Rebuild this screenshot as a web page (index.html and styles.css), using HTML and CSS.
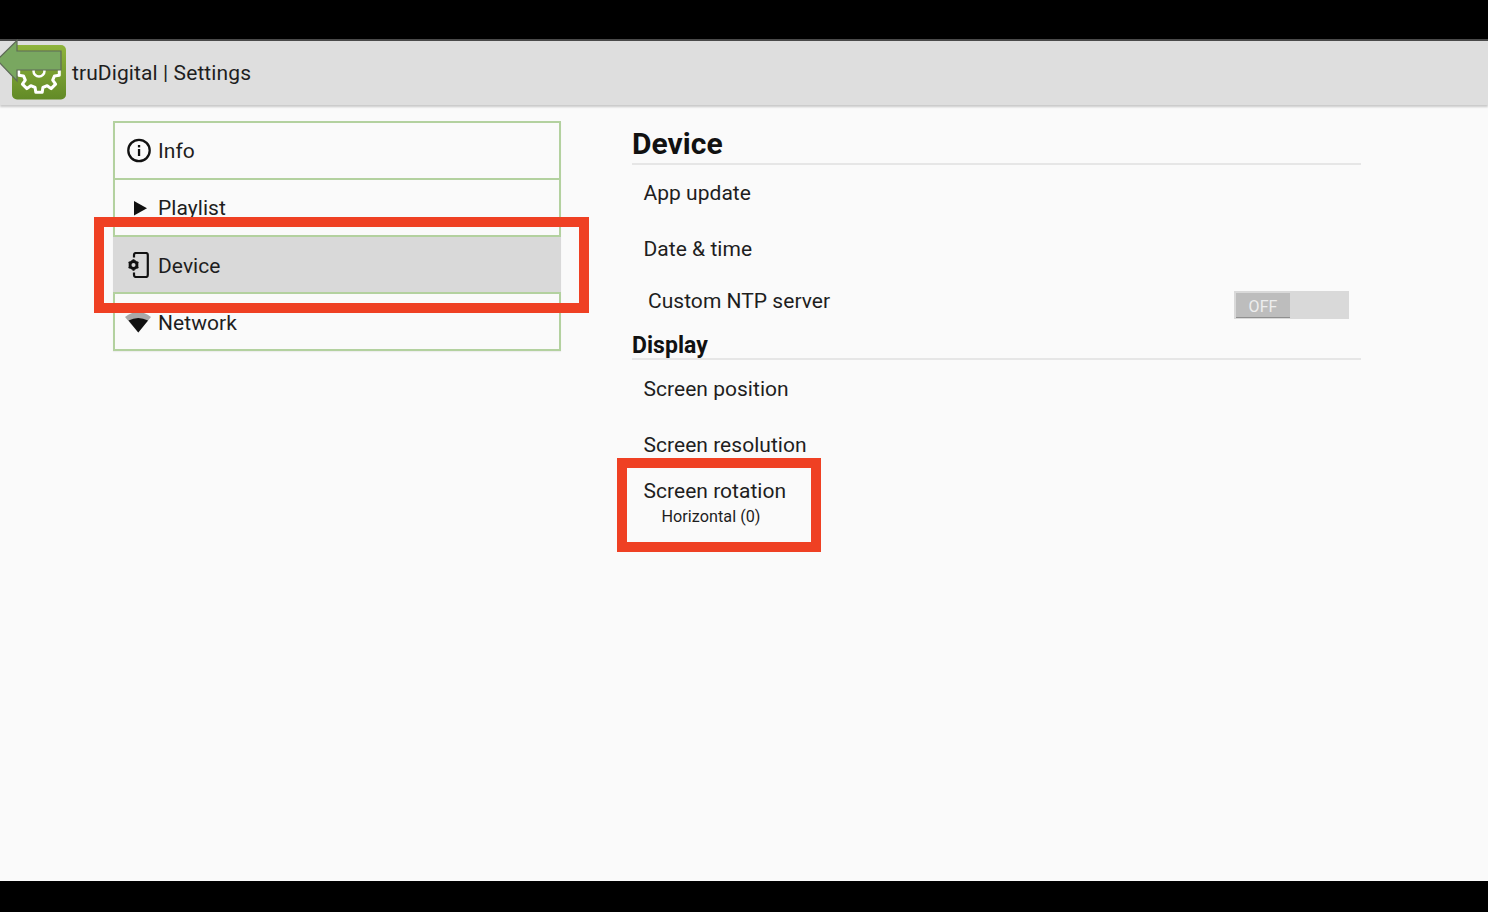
FILE: index.html
```html
<!DOCTYPE html>
<html lang="en">
<head>
<meta charset="utf-8">
<title>truDigital | Settings</title>
<link rel="stylesheet" href="styles.css">
</head>
<body>
<div class="screen">
  <div class="letterbox-top"></div>
  <header class="appbar">
    <svg class="app-logo" width="66" height="64" viewBox="0 39 66 64" aria-hidden="true">
      <defs>
        <linearGradient id="lg" x1="0" y1="0" x2="0" y2="1">
          <stop offset="0" stop-color="#8fb43c"/>
          <stop offset="1" stop-color="#628a27"/>
        </linearGradient>
      </defs>
      <rect x="12" y="45" width="54" height="54.500" rx="5" fill="url(#lg)"/>
      <path d="M54.500 68.100 L59.300 68.800 L59.300 75.200 L54.500 75.900 L52.700 80.200 L55.600 84.100 L51.100 88.600 L47.200 85.700 L42.900 87.500 L42.200 92.200 L35.800 92.200 L35.100 87.500 L30.800 85.700 L26.900 88.600 L22.400 84.100 L25.300 80.200 L23.500 75.900 L18.700 75.200 L18.700 68.800 L23.500 68.100" fill="none" stroke="#fff" stroke-width="3" stroke-linejoin="round"/>
      <circle cx="39" cy="71" r="5.500" fill="none" stroke="#fff" stroke-width="2.500"/>
      <path d="M-3 60 L17 40.500 V51 H61 V70 H17 V81 Z" fill="#79a760" stroke="#5f6b58" stroke-width="1.200"/>
    </svg>
    <span class="app-title">truDigital | Settings</span>
  </header>
  <main class="content">
    <nav class="side">
      <div class="side-item">
        <svg class="side-icon" width="26" height="26" viewBox="0 0 26 26" aria-hidden="true">
          <circle cx="13" cy="12.500" r="10.700" fill="none" stroke="#111" stroke-width="2.300"/>
          <rect x="11.900" y="11" width="2.300" height="7" fill="#111"/>
          <rect x="11.900" y="7" width="2.300" height="2.400" fill="#111"/>
        </svg>
        <span>Info</span>
      </div>
      <div class="side-item">
        <svg class="side-icon" width="26" height="26" viewBox="0 0 26 26" aria-hidden="true">
          <path d="M8 6 L21 13.300 L8 20.500 Z" fill="#111"/>
        </svg>
        <span>Playlist</span>
      </div>
      <div class="side-item is-active">
        <svg class="side-icon" width="26" height="26" viewBox="0 0 26 26" aria-hidden="true">
          <path d="M8 5.500 V2.800 Q8 1 10 1 H20 Q21.800 1 21.800 2.800 V23 Q21.800 25 20 25 H10 Q8 25 8 23 V20.500" fill="none" stroke="#111" stroke-width="2.200"/>
          <circle cx="7.500" cy="13" r="3.600" fill="none" stroke="#111" stroke-width="2.600"/>
          <path d="M7.500 7.300 V18.700 M2.600 10.200 L12.400 15.800 M2.600 15.800 L12.400 10.200" stroke="#111" stroke-width="2"/>
          <circle cx="7.500" cy="13" r="2" fill="#d9d9d9"/>
        </svg>
        <span class="label-low">Device</span>
      </div>
      <div class="side-item">
        <svg class="side-icon icon-wide" width="26" height="26" viewBox="0 0 26 26" aria-hidden="true">
          <path d="M-1 8 Q12 -2 25 8 L12.300 23.500 Z" fill="#a9a9a9"/>
          <path d="M2.500 11.500 Q12.300 6.500 22 11.500 L12.300 23.500 Z" fill="#111"/>
        </svg>
        <span class="label-low">Network</span>
      </div>
    </nav>
    <section class="panel">
      <h1 class="heading-main">Device</h1>
      <div class="row">App update</div>
      <div class="row">Date &amp; time</div>
      <div class="row row-toggle">
        <span>Custom NTP server</span>
        <span class="toggle"><span class="toggle-thumb">OFF</span></span>
      </div>
      <h2 class="heading-sub">Display</h2>
      <div class="row row-display">Screen position</div>
      <div class="row row-display">Screen resolution</div>
      <div class="row-double">
        <div>Screen rotation</div>
        <div class="row-sub">Horizontal (0)</div>
      </div>
    </section>
  </main>
  <div class="letterbox-bottom"></div>
  <div class="mark mark-device"></div>
  <div class="mark mark-rotation"></div>
</div>
</body>
</html>
```

FILE: styles.css
```css
* { box-sizing: border-box; }
html, body { margin: 0; height: 100%; }
body { background: #000; font-family: Roboto, "Liberation Sans", sans-serif; color: #1e1e1e; overflow: hidden; }
.screen { position: relative; width: 1488px; height: 912px; display: flex; flex-direction: column; background: #fafafa; }
.letterbox-top { height: 39px; background: #000; flex: none; }
.letterbox-bottom { height: 31px; background: #000; flex: none; }
.appbar { height: 66px; flex: none; display: flex; align-items: flex-start; background: #dedede; border-top: 2px solid #4a4a4a; box-shadow: 0 2px 2px rgba(0,0,0,.2); position: relative; font-size: 21px; }
.app-logo { display: block; flex: none; margin-top: -2px; }
.app-title { margin-left: 6px; line-height: 27px; margin-top: 19px; letter-spacing: .1px; }
.content { flex: 1; display: flex; align-items: flex-start; padding-left: 113px; }
.side { width: 448px; margin-top: 16px; flex: none; border: 2px solid #b3d19f; box-shadow: 0 1px 1px rgba(0,0,0,.05); }
.side-item { height: 57px; display: flex; align-items: center; gap: 6px; padding-left: 11px; border-bottom: 2px solid #b3d19f; font-size: 21px; letter-spacing: .05px; color: #1e1e1e; }
.side-item:last-child { border-bottom: 0; height: 55px; }
.is-active { background: #d9d9d9; margin: 0 -2px; padding-left: 13px; }
.label-low { padding-top: 2px; }
.side-icon { flex: none; display: block; }
.icon-wide { overflow: visible; }
.panel { width: 729px; margin-left: 71px; padding-top: 21px; font-size: 21px; letter-spacing: .03px; }
.heading-main { margin: 0; height: 39px; line-height: 36px; font-size: 30px; font-weight: 700; color: #111; border-bottom: 2px solid #e6e6e6; }
.heading-sub { margin: 0; height: 31px; line-height: 34px; font-size: 23px; font-weight: 700; color: #111; border-bottom: 2px solid #e6e6e6; }
.row { height: 56px; line-height: 57px; padding-left: 11.500px; }
.row-display { line-height: 58px; }
.row-toggle { height: 52px; line-height: 49px; padding: 0 12px 0 16px; display: flex; justify-content: space-between; align-items: flex-start; }
.toggle { width: 115px; height: 28px; margin-top: 14px; padding: 2px; background: #d9d9d9; display: block; }
.toggle-thumb { display: block; width: 54px; height: 25px; background: #bdbdbd; border-bottom: 1px solid #8f8f8f; color: #eee; font-size: 16px; line-height: 27px; text-align: center; }
.row-double { padding-left: 11.500px; line-height: 28px; margin-top: 5px; }
.row-sub { font-size: 16.200px; padding-left: 18px; line-height: 24px; }
.mark { position: absolute; border: 10px solid #ef4023; }
.mark-device { left: 94px; top: 217px; width: 495px; height: 96px; }
.mark-rotation { left: 617px; top: 458px; width: 204px; height: 94px; }
```
